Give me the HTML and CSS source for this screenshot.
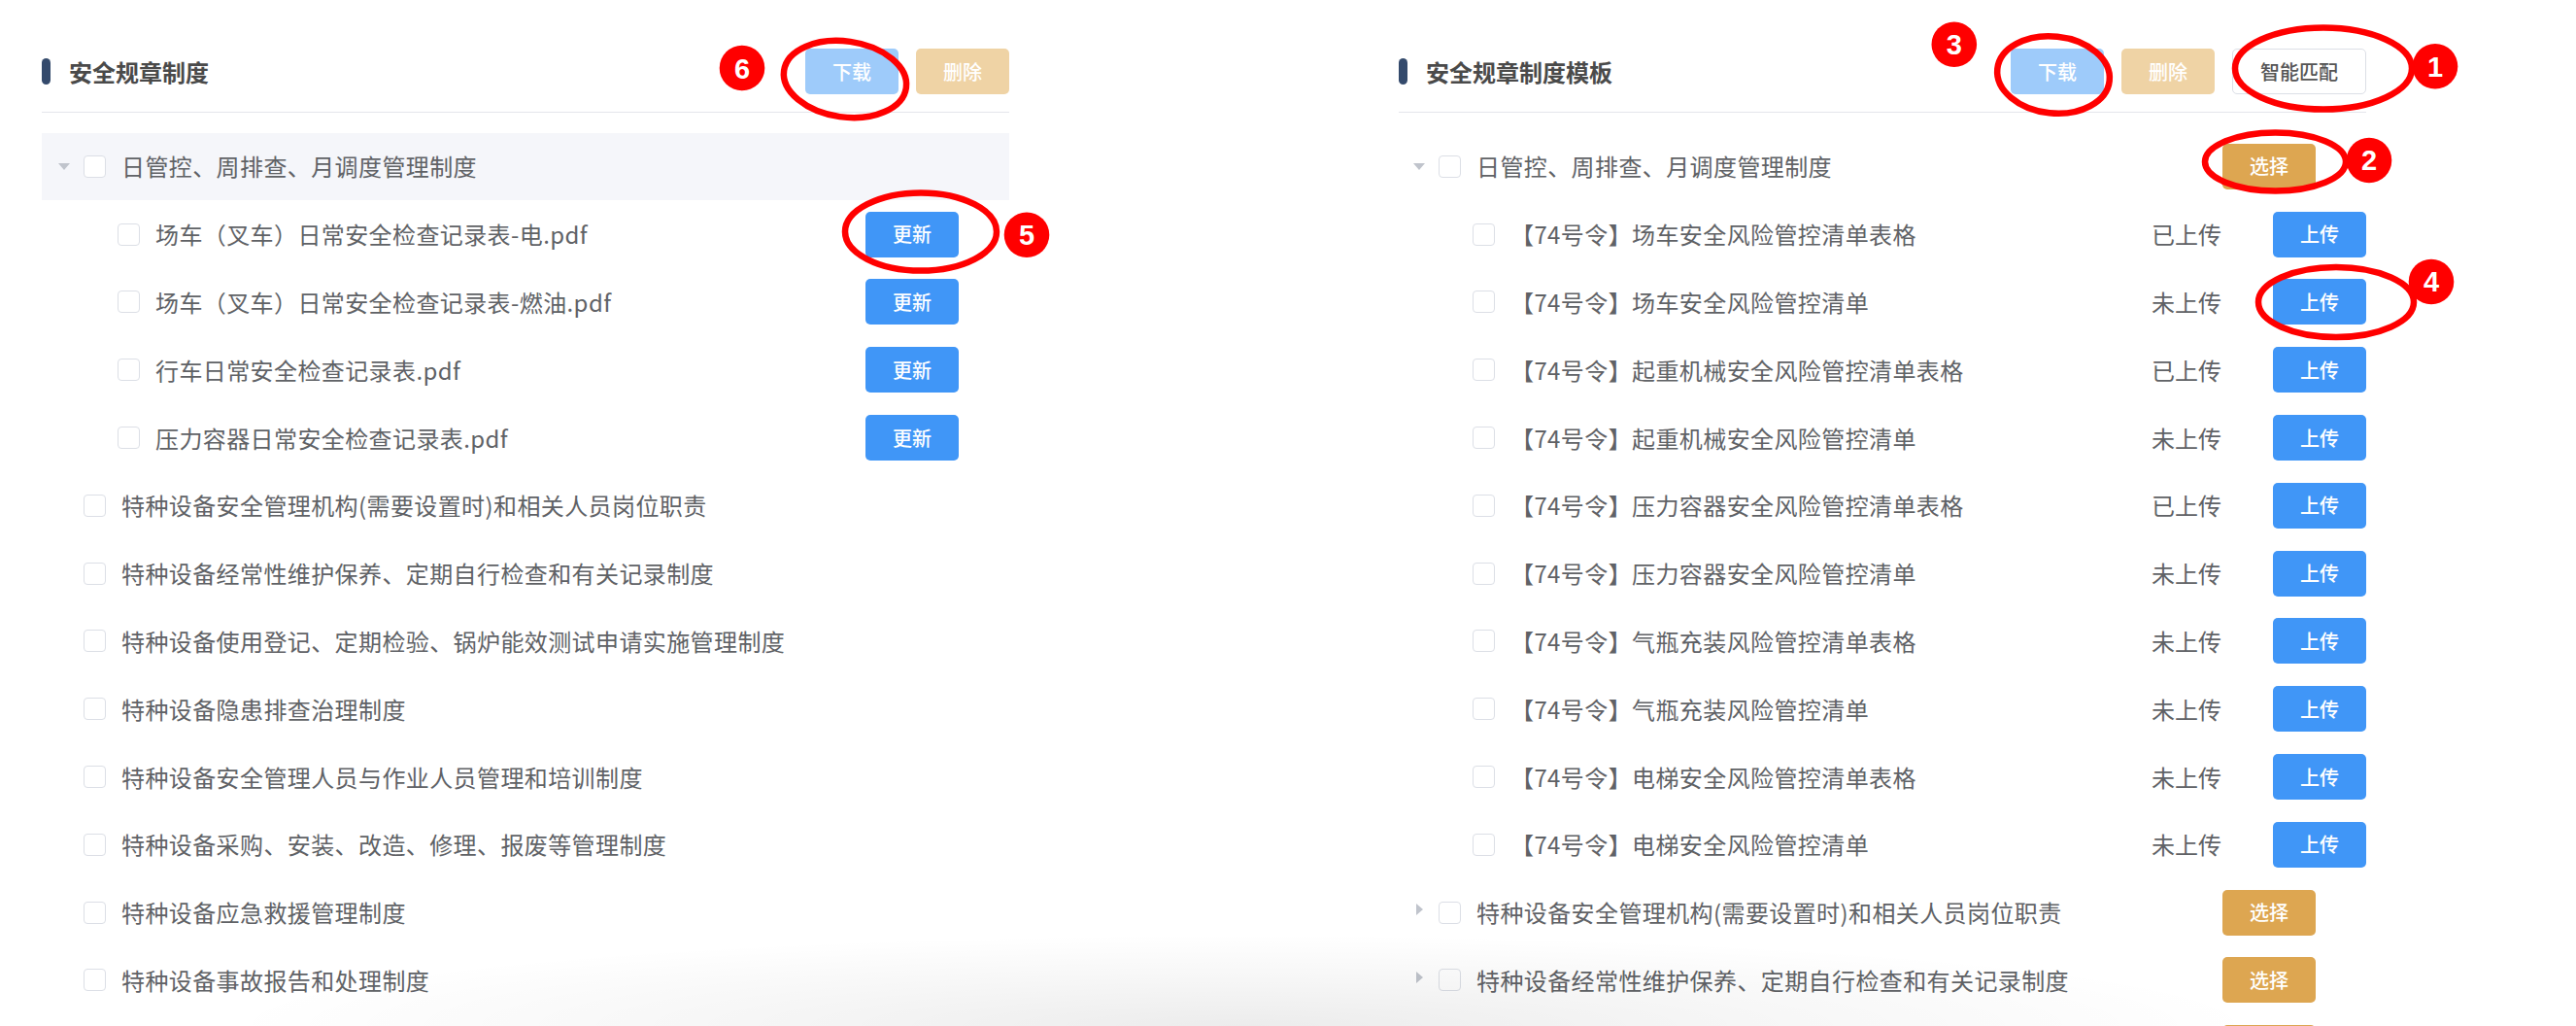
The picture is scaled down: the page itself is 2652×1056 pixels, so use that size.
FILE: index.html
```html
<!DOCTYPE html>
<html lang="zh-CN">
<head>
<meta charset="utf-8">
<title>安全规章制度</title>
<link rel="stylesheet" href="styles.css">
</head>
<body>
<div class="page">
  <section class="panel">
    <header class="panel-head">
      <div class="title"><span class="accent"></span>安全规章制度</div>
      <div class="actions">
        <button class="btn btn-primary-light">下载</button>
        <button class="btn btn-warning-light">删除</button>
      </div>
    </header>
    <ul class="tree">
      <li class="node current"><span class="caret down"></span><span class="cb"></span><span class="label">日管控、周排查、月调度管理制度</span></li>
      <li class="node l2"><span class="caret"></span><span class="cb"></span><span class="label">场车（叉车）日常安全检查记录表-电.pdf</span><button class="btn btn-primary row-btn">更新</button></li>
      <li class="node l2"><span class="caret"></span><span class="cb"></span><span class="label">场车（叉车）日常安全检查记录表-燃油.pdf</span><button class="btn btn-primary row-btn">更新</button></li>
      <li class="node l2"><span class="caret"></span><span class="cb"></span><span class="label">行车日常安全检查记录表.pdf</span><button class="btn btn-primary row-btn">更新</button></li>
      <li class="node l2"><span class="caret"></span><span class="cb"></span><span class="label">压力容器日常安全检查记录表.pdf</span><button class="btn btn-primary row-btn">更新</button></li>
      <li class="node"><span class="caret"></span><span class="cb"></span><span class="label">特种设备安全管理机构(需要设置时)和相关人员岗位职责</span></li>
      <li class="node"><span class="caret"></span><span class="cb"></span><span class="label">特种设备经常性维护保养、定期自行检查和有关记录制度</span></li>
      <li class="node"><span class="caret"></span><span class="cb"></span><span class="label">特种设备使用登记、定期检验、锅炉能效测试申请实施管理制度</span></li>
      <li class="node"><span class="caret"></span><span class="cb"></span><span class="label">特种设备隐患排查治理制度</span></li>
      <li class="node"><span class="caret"></span><span class="cb"></span><span class="label">特种设备安全管理人员与作业人员管理和培训制度</span></li>
      <li class="node"><span class="caret"></span><span class="cb"></span><span class="label">特种设备采购、安装、改造、修理、报废等管理制度</span></li>
      <li class="node"><span class="caret"></span><span class="cb"></span><span class="label">特种设备应急救援管理制度</span></li>
      <li class="node"><span class="caret"></span><span class="cb"></span><span class="label">特种设备事故报告和处理制度</span></li>
    </ul>
  </section>

  <section class="panel panel-right">
    <header class="panel-head">
      <div class="title"><span class="accent"></span>安全规章制度模板</div>
      <div class="actions">
        <button class="btn btn-primary-light">下载</button>
        <button class="btn btn-warning-light">删除</button>
        <button class="btn btn-plain">智能匹配</button>
      </div>
    </header>
    <ul class="tree">
      <li class="node"><span class="caret down"></span><span class="cb"></span><span class="label">日管控、周排查、月调度管理制度</span><button class="btn btn-warning row-btn">选择</button></li>
      <li class="node l2"><span class="caret"></span><span class="cb"></span><span class="label">【74号令】场车安全风险管控清单表格</span><span class="status">已上传</span><button class="btn btn-primary">上传</button></li>
      <li class="node l2"><span class="caret"></span><span class="cb"></span><span class="label">【74号令】场车安全风险管控清单</span><span class="status">未上传</span><button class="btn btn-primary">上传</button></li>
      <li class="node l2"><span class="caret"></span><span class="cb"></span><span class="label">【74号令】起重机械安全风险管控清单表格</span><span class="status">已上传</span><button class="btn btn-primary">上传</button></li>
      <li class="node l2"><span class="caret"></span><span class="cb"></span><span class="label">【74号令】起重机械安全风险管控清单</span><span class="status">未上传</span><button class="btn btn-primary">上传</button></li>
      <li class="node l2"><span class="caret"></span><span class="cb"></span><span class="label">【74号令】压力容器安全风险管控清单表格</span><span class="status">已上传</span><button class="btn btn-primary">上传</button></li>
      <li class="node l2"><span class="caret"></span><span class="cb"></span><span class="label">【74号令】压力容器安全风险管控清单</span><span class="status">未上传</span><button class="btn btn-primary">上传</button></li>
      <li class="node l2"><span class="caret"></span><span class="cb"></span><span class="label">【74号令】气瓶充装风险管控清单表格</span><span class="status">未上传</span><button class="btn btn-primary">上传</button></li>
      <li class="node l2"><span class="caret"></span><span class="cb"></span><span class="label">【74号令】气瓶充装风险管控清单</span><span class="status">未上传</span><button class="btn btn-primary">上传</button></li>
      <li class="node l2"><span class="caret"></span><span class="cb"></span><span class="label">【74号令】电梯安全风险管控清单表格</span><span class="status">未上传</span><button class="btn btn-primary">上传</button></li>
      <li class="node l2"><span class="caret"></span><span class="cb"></span><span class="label">【74号令】电梯安全风险管控清单</span><span class="status">未上传</span><button class="btn btn-primary">上传</button></li>
      <li class="node"><span class="caret right"></span><span class="cb"></span><span class="label">特种设备安全管理机构(需要设置时)和相关人员岗位职责</span><button class="btn btn-warning row-btn">选择</button></li>
      <li class="node"><span class="caret right"></span><span class="cb"></span><span class="label">特种设备经常性维护保养、定期自行检查和有关记录制度</span><button class="btn btn-warning row-btn">选择</button></li>
      <li class="node node-peek"><button class="btn btn-warning row-btn">选择</button></li>
    </ul>
  </section>
</div>

<div class="bottom-shade"></div>

<svg class="annotations" width="2652" height="1056" viewBox="0 0 2652 1056">
  <g class="ring">
    <ellipse cx="870" cy="81.5" rx="63.5" ry="39" transform="rotate(8 870 81.5)"/>
    <ellipse cx="948" cy="238.5" rx="78" ry="40"/>
    <ellipse cx="2114" cy="77" rx="58" ry="39.5" transform="rotate(6 2114 77)"/>
    <ellipse cx="2392" cy="70.5" rx="91" ry="42"/>
    <ellipse cx="2342.5" cy="166.5" rx="72.5" ry="30"/>
    <ellipse cx="2405" cy="311" rx="80" ry="36"/>
  </g>
  <g class="badge">
    <circle cx="764" cy="70" r="23.3"/><text x="764" y="80.5">6</text>
    <circle cx="1057" cy="241.7" r="23.3"/><text x="1057" y="252">5</text>
    <circle cx="2011.8" cy="45.7" r="23.3"/><text x="2011.8" y="56">3</text>
    <circle cx="2507" cy="68.3" r="23.3"/><text x="2507" y="78.6">1</text>
    <circle cx="2439" cy="165" r="23.3"/><text x="2439" y="175.3">2</text>
    <circle cx="2503" cy="290" r="23.3"/><text x="2503" y="300.3">4</text>
  </g>
</svg>
</body>
</html>
```

FILE: styles.css
```css
* {
  box-sizing: border-box;
  margin: 0;
  padding: 0;
}

html,
body {
  width: 2652px;
  height: 1056px;
  overflow: hidden;
  background: #ffffff;
}

body {
  position: relative;
  font-family: "Noto Sans CJK SC", "Liberation Sans", sans-serif;
  color: #606266;
}

.page {
  display: flex;
  align-items: flex-start;
  padding-left: 43px;
  gap: 401px;
  height: 1056px;
  overflow: hidden;
}

.panel {
  flex: none;
  width: 996px;
}

.panel-head {
  display: flex;
  align-items: center;
  justify-content: space-between;
  padding-top: 50px;
  padding-bottom: 18px;
  border-bottom: 1px solid #e4e6eb;
}

.title {
  display: flex;
  align-items: center;
  font-size: 24px;
  line-height: 1;
  font-weight: 600;
  color: #4a4a4a;
}

.accent {
  width: 9px;
  height: 27px;
  border-radius: 5px;
  background: #344a6c;
  margin-right: 19px;
}

.actions {
  display: flex;
  gap: 18px;
}

.btn {
  flex: none;
  display: flex;
  align-items: center;
  justify-content: center;
  width: 96px;
  height: 47px;
  border: none;
  border-radius: 5px;
  font-family: inherit;
  font-size: 20px;
  font-weight: 500;
  line-height: 1;
  color: #ffffff;
}

.btn-primary {
  background: #4096f7;
}

.btn-primary-light {
  background: #9ecbfa;
}

.btn-warning {
  background: #dda651;
}

.btn-warning-light {
  background: #efd3a5;
}

.btn-plain {
  width: 138px;
  background: #ffffff;
  border: 1px solid #dcdfe6;
  color: #555555;
}

.row-btn {
  margin-right: 52px;
}

.tree {
  list-style: none;
  margin-top: 20.5px;
}

.node {
  display: flex;
  align-items: center;
  height: 69.8px;
  font-size: 24px;
  line-height: 1;
}

.node.current {
  background: #f5f6fa;
}

.node.l2 {
  padding-left: 35px;
}

.node-peek {
  justify-content: flex-end;
}

.caret {
  flex: none;
  display: flex;
  align-items: center;
  justify-content: center;
  width: 12px;
  height: 14px;
  margin-left: 17px;
  margin-right: 14px;
}

.caret.down::before {
  content: "";
  border-left: 6px solid transparent;
  border-right: 6px solid transparent;
  border-top: 7px solid #c0c4cc;
}

.caret.right::before {
  content: "";
  margin-top: -6px;
  border-top: 6.5px solid transparent;
  border-bottom: 6.5px solid transparent;
  border-left: 7px solid #c0c4cc;
}

.panel-right .node > .caret {
  margin-left: 15px;
}

.cb {
  flex: none;
  width: 23px;
  height: 23px;
  border: 1px solid #dcdfe6;
  border-radius: 4px;
  background: #ffffff;
  margin-right: 16px;
}

.label {
  flex: 1;
  white-space: nowrap;
  letter-spacing: 0.4px;
}

.status {
  flex: none;
  width: 72px;
  margin-right: 53px;
  white-space: nowrap;
}

.bottom-shade {
  position: absolute;
  left: 0;
  bottom: 0;
  width: 2652px;
  height: 110px;
  pointer-events: none;
  background: radial-gradient(ellipse 1050px 95px at 1280px 100%, rgba(0, 0, 0, 0.075), rgba(0, 0, 0, 0.03) 55%, rgba(0, 0, 0, 0) 100%);
}

.annotations {
  position: absolute;
  left: 0;
  top: 0;
  pointer-events: none;
}

.ring ellipse {
  fill: none;
  stroke: #ff0000;
  stroke-width: 6.5;
}

.badge circle {
  fill: #ff0000;
}

.badge text {
  fill: #ffffff;
  font-family: "Liberation Sans", Arial, sans-serif;
  font-size: 29px;
  font-weight: 700;
  text-anchor: middle;
}
```
